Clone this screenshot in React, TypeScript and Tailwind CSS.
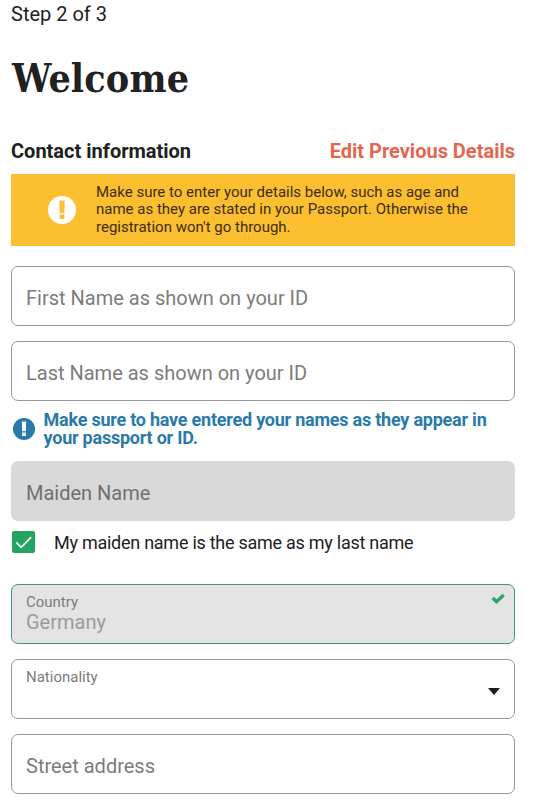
import React from 'react';

const TextField = ({ label }: { label: string }) => (
  <div className="flex h-[60px] items-center rounded-[7px] border border-[#979797] bg-white px-[14px] pt-[3px] text-[20px] text-[#7c7c7c]">
    {label}
  </div>
);

const AlertIcon = ({ className, mark }: { className: string; mark: string }) => (
  <svg viewBox="0 0 28 28" className={className}>
    <circle cx="14" cy="14" r="14" fill="currentColor" />
    <path d="M11.300 4.500h5.400l-.4 12.500h-4.600zM11.600 18.500h4.800v4.500h-4.800z" fill={mark} />
  </svg>
);

export default function App() {
  return (
    <div className="h-[804px] w-[542px] overflow-hidden bg-white pl-[11px] pr-[27px] font-[Roboto,sans-serif] text-[#212121]">
      <p className="mt-[2px] h-[25px] text-[20px] leading-[25px]">Step 2 of 3</p>
      <h1 className="ml-px mt-[22px] h-[58px] whitespace-nowrap font-['Roboto_Slab','DejaVu_Serif_Condensed','DejaVu_Serif',serif] text-[39px] font-bold leading-[58px] [font-stretch:condensed] tracking-[0.15px]">
        Welcome
      </h1>
      <div className="mt-[31px] flex h-[26px] items-center justify-between text-[20px] font-bold">
        <h2>Contact information</h2>
        <a className="text-[#e2674f]">Edit Previous Details</a>
      </div>

      <div className="mt-[10px] flex h-[72px] items-center bg-[#fbbf2f]">
        <AlertIcon className="ml-[37px] h-7 w-7 shrink-0 text-white" mark="#fbbf2f" />
        <p className="ml-[20px] whitespace-nowrap text-[15px] leading-[17.5px] text-[#3d2c12]">
          Make sure to enter your details below, such as age and
          <br />
          name as they are stated in your Passport. Otherwise the
          <br />
          registration won't go through.
        </p>
      </div>

      <div className="mt-[20px] space-y-[15px]">
        <TextField label="First Name as shown on your ID" />
        <TextField label="Last Name as shown on your ID" />
      </div>

      <div className="flex h-[60px] items-center pb-[4px] text-[#2a7aa8]">
        <AlertIcon className="ml-[1.5px] h-[22px] w-[22px] shrink-0" mark="#fff" />
        <p className="ml-[9px] whitespace-nowrap text-[18px] font-bold leading-[18px] tracking-[-0.23px]">
          Make sure to have entered your names as they appear in
          <br />
          your passport or ID.
        </p>
      </div>

      <div className="flex h-[60px] items-center rounded-[7px] bg-[#d9d9d9] px-[15px] pt-[3px] text-[20px] text-[#707070]">
        Maiden Name
      </div>
      <div className="mt-[9px] flex h-6 items-center">
        <span className="ml-px flex h-[22px] w-[23px] items-center justify-center rounded-[2px] bg-[#23a562]">
          <svg viewBox="0 0 24 23" className="h-[22px] w-[23px]" fill="none" stroke="#fff" strokeWidth="1.800">
            <path d="M4.500 12l5 5L20 6.500" />
          </svg>
        </span>
        <span className="ml-[19px] text-[18px] tracking-[-0.26px]">My maiden name is the same as my last name</span>
      </div>

      <div className="mt-[30px] flex h-[60px] justify-between rounded-[7px] border border-[#3c9b6b] bg-[#e4e4e4] pl-[14px] pr-[9px]">
        <div>
          <p className="mt-[8px] text-[15px] leading-[18px] text-[#7c7c7c]">Country</p>
          <p className="text-[20px] leading-[22px] text-[#9b9b9b]">Germany</p>
        </div>
        <svg viewBox="0 0 14 12" className="mt-[8px] h-3 w-[14px]" fill="none" stroke="#2aa567" strokeWidth="3.400">
          <path d="M1.700 5L5.500 8.700 12.700 2" />
        </svg>
      </div>

      <div className="mt-[15px] flex h-[60px] justify-between rounded-[7px] border border-[#979797] pl-[14px] pr-[14px]">
        <p className="mt-[8px] text-[15px] leading-[18px] text-[#7c7c7c]">Nationality</p>
        <svg viewBox="0 0 12 7" className="mt-[28px] h-[7px] w-3" fill="#1c1c1c">
          <path d="M0 0h12L6 7z" />
        </svg>
      </div>
      <div className="mt-[15px]">
        <TextField label="Street address" />
      </div>
    </div>
  );
}
